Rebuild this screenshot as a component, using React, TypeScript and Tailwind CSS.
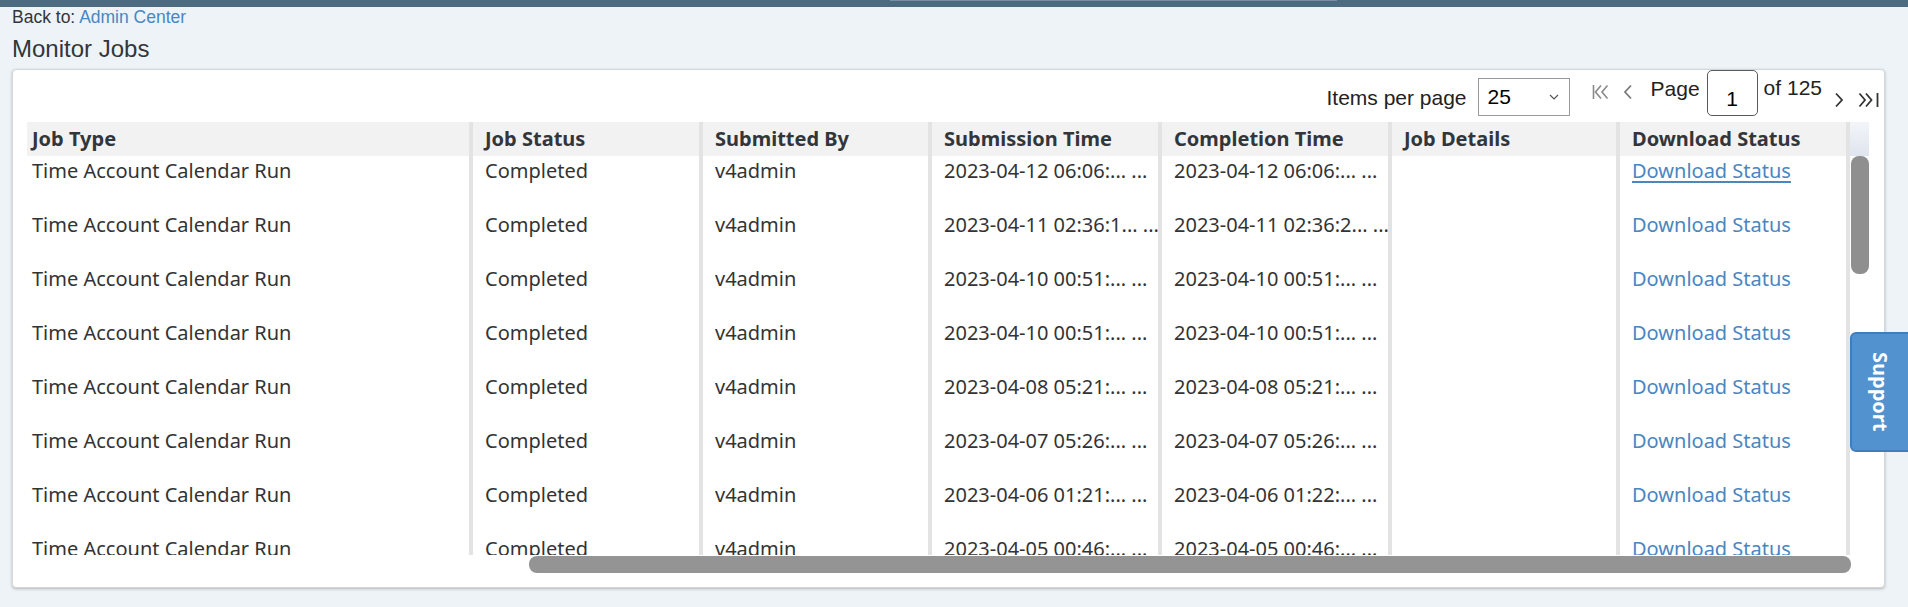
import React from "react";

const COLS = [
  { label: "Job Type", w: "w-[442px]", first: true },
  { label: "Job Status", w: "w-[230px]" },
  { label: "Submitted By", w: "w-[229px]" },
  { label: "Submission Time", w: "w-[230px]" },
  { label: "Completion Time", w: "w-[230px]" },
  { label: "Job Details", w: "w-[228px]" },
  { label: "Download Status", w: "w-[230px]" },
];

const TIMES = [
  ["2023-04-12 06:06:... ...", "2023-04-12 06:06:... ..."],
  ["2023-04-11 02:36:1... ...", "2023-04-11 02:36:2... ..."],
  ["2023-04-10 00:51:... ...", "2023-04-10 00:51:... ..."],
  ["2023-04-10 00:51:... ...", "2023-04-10 00:51:... ..."],
  ["2023-04-08 05:21:... ...", "2023-04-08 05:21:... ..."],
  ["2023-04-07 05:26:... ...", "2023-04-07 05:26:... ..."],
  ["2023-04-06 01:21:... ...", "2023-04-06 01:22:... ..."],
  ["2023-04-05 00:46:... ...", "2023-04-05 00:46:... ..."],
];

function Cell({ w, first, children }: { w: string; first?: boolean; children?: React.ReactNode }) {
  return (
    <div
      className={`${w} shrink-0 h-[54px] overflow-hidden whitespace-nowrap pt-[3px] leading-[24px] ${
        first ? "pl-[5px]" : "border-l-4 border-[#e3e3e3] pl-[12px]"
      }`}
    >
      {children}
    </div>
  );
}

function Chevron({ dir, className }: { dir: "left" | "right"; className?: string }) {
  return (
    <svg width="10" height="16" viewBox="0 0 10 16" className={className} fill="none" stroke="currentColor" strokeWidth="1.8">
      {dir === "left" ? <path d="M8 1.5 2 8l6 6.5" /> : <path d="M2 1.5 8 8l-6 6.5" />}
    </svg>
  );
}

export default function App() {
  return (
    <div className="relative h-[607px] w-[1908px] overflow-hidden bg-[#eef3f7] font-['Liberation_Sans',Arial,sans-serif] text-[#32363a]">
      <div className="h-[7px] bg-[#4c6a80]">
        <div className="ml-[890px] h-px w-[447px] bg-[#7990a3]" />
      </div>

      <div className="pl-[12px] text-[17.5px] leading-[20px]">
        Back to: <a className="text-[#4a86c1]">Admin Center</a>
      </div>
      <h1 className="mt-[8px] pl-[12px] text-[24px] leading-[28px]">Monitor Jobs</h1>

      <div className="ml-[12px] mt-[6px] h-[519px] w-[1873px] rounded-[4px] border border-[#d4d7da] bg-white shadow-[0_1px_3px_rgba(0,0,0,0.25)]">
        {/* toolbar */}
        <div className="flex h-[52px] items-start justify-end pr-[4px] text-[20px]">
          <span className="mt-[16px] text-[21px] leading-[24px] text-[#222]">Items per page</span>
          <div className="ml-[11px] mt-[8px] flex h-[38px] w-[92px] items-center justify-between border border-[#9a9a9a] pl-[9px] pr-[10px]">
            <span className="text-[21px] text-black">25</span>
            <svg width="10" height="6" viewBox="0 0 10 6" fill="none" stroke="#555" strokeWidth="1.2">
              <path d="M1 1l4 4 4-4" />
            </svg>
          </div>
          <svg width="18" height="16" viewBox="0 0 18 16" className="ml-[22px] mt-[14px] text-[#8a8a8a]" fill="none" stroke="currentColor" strokeWidth="1.6">
            <path d="M1.5 1v14M9 1.5 3.5 8 9 14.5M15.5 1.5 10 8l5.5 6.5" />
          </svg>
          <Chevron dir="left" className="ml-[13px] mt-[14px] text-[#7a7a7a]" />
          <span className="ml-[18px] mt-[7px] text-[21px] leading-[24px] text-[#222]">Page</span>
          <div className="ml-[7px] flex h-[46px] w-[51px] items-end justify-center rounded-[5px] border border-[#5a5a5a] pb-[4px] text-[21px] leading-[24px] text-black">
            1
          </div>
          <span className="ml-[6px] mt-[6px] text-[21px] leading-[24px] text-[#222]">of 125</span>
          <Chevron dir="right" className="ml-[12px] mt-[22px] text-[#333]" />
          <svg width="22" height="16" viewBox="0 0 22 16" className="ml-[14px] mt-[22px] text-[#333]" fill="none" stroke="currentColor" strokeWidth="1.8">
            <path d="M1.5 1.5 7 8l-5.5 6.5M8 1.5 13.5 8 8 14.5M19.5 1v14" />
          </svg>
        </div>

        {/* table */}
        <div className="ml-[14px] flex w-[1842px] font-['Noto_Sans',sans-serif] text-[20px]">
          <div className="w-[1819px]">
            <div className="flex h-[34px] bg-[#f2f2f2] font-bold text-[#32363a]">
              {COLS.map((c) => (
                <div
                  key={c.label}
                  className={`${c.w} shrink-0 whitespace-nowrap leading-[34px] ${
                    c.first ? "pl-[5px]" : "border-l-4 border-[#e3e3e3] pl-[12px]"
                  }`}
                >
                  {c.label}
                </div>
              ))}
            </div>
            <div className="h-[399px] overflow-hidden text-[#333]">
              {TIMES.map((t, i) => (
                <div key={i} className="flex">
                  <Cell w="w-[442px]" first>
                    Time Account Calendar Run
                  </Cell>
                  <Cell w="w-[230px]">Completed</Cell>
                  <Cell w="w-[229px]">v4admin</Cell>
                  <Cell w="w-[230px]">{t[0]}</Cell>
                  <Cell w="w-[230px]">{t[1]}</Cell>
                  <Cell w="w-[228px]" />
                  <Cell w="w-[230px]">
                    <a className={`text-[#4a86c1] ${i === 0 ? "underline underline-offset-[3px]" : ""}`}>Download Status</a>
                  </Cell>
                </div>
              ))}
            </div>
          </div>
          <div className="w-[4px] bg-[#e3e3e3]" />
          <div className="flex w-[19px] flex-col">
            <div className="h-[34px] bg-gradient-to-b from-[#f3f5f9] to-[#dfe5ee]" />
            <div className="h-[399px] pl-[1px]">
              <div className="h-[118px] w-[18px] rounded-[8px] bg-[#8f8f8f]" />
            </div>
          </div>
        </div>
        <div className="ml-[516px] mt-[1px] h-[17px] w-[1322px] rounded-[8px] bg-[#949494]" />
      </div>

      <div className="absolute left-[1850px] top-[332px] flex h-[120px] w-[64px] items-center justify-center rounded-[6px] border-2 border-[#3f7dbd] bg-[#5292cf]">
        <span className="pr-[4px] font-['Noto_Sans',sans-serif] text-[20px] font-bold text-white [writing-mode:vertical-rl]">
          Support
        </span>
      </div>
    </div>
  );
}
